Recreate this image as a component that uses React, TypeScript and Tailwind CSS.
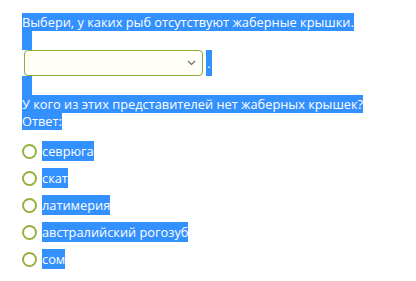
import React from 'react';

const options = ['севрюга', 'скат', 'латимерия', 'австралийский рогозуб', 'сом'];

function Hl({ children }: { children: React.ReactNode }) {
  return <span className="bg-[#3390ff] text-white">{children}</span>;
}

export default function App() {
  return (
    <div className="w-[416px] h-[281px] bg-white pt-[14px] pl-[22px] font-['Open_Sans',sans-serif] text-[12.8px] leading-[17px] text-white">
      <div>
        <Hl>Выбери, у каких рыб отсутствуют жаберные крышки.</Hl>
      </div>
      <div className="w-[10px] h-[19px] bg-[#3390ff]" />

      {/* dropdown + trailing dot */}
      <div className="flex h-[26px]">
        <div className="ml-[2px] w-[179px] h-[26px] rounded-[4px] border-[1.5px] border-[#8aab3c] bg-[#fffff8] flex items-center justify-end pr-[6px]">
          <svg width="9" height="6" viewBox="0 0 9 6" fill="none">
            <path d="M1 1l3.5 3.5L8 1" stroke="#6b6b6b" strokeWidth="1.2" />
          </svg>
        </div>
        <span className="ml-[3px] w-[6px] bg-[#3390ff] flex items-center justify-center leading-none">.</span>
      </div>
      <div className="w-[10px] h-[20px] bg-[#3390ff]" />

      <div>
        <Hl>У кого из этих представителей нет жаберных крышек?</Hl>
      </div>
      <div>
        <Hl>Ответ:</Hl>
      </div>

      <div className="mt-[11px] flex flex-col gap-[7px]">
        {options.map((o) => (
          <div key={o} className="flex items-center h-[20px]">
            <span className="w-[15px] h-[15px] rounded-full border-2 border-[#95b13e] bg-white shrink-0" />
            <span className="ml-[5px] bg-[#3390ff] text-white leading-[20px]">{o}</span>
          </div>
        ))}
      </div>
    </div>
  );
}
